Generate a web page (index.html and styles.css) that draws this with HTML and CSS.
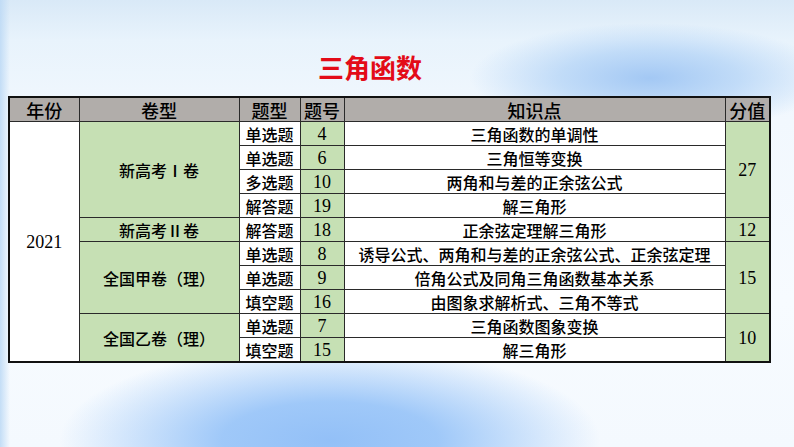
FILE: index.html
```html
<!DOCTYPE html>
<html lang="zh">
<head>
<meta charset="utf-8">
<link rel="stylesheet" href="styles.css">
</head>
<body>
<div class="page">
  <h1 class="title">三角函数</h1>
  <table class="grid">
    <colgroup>
      <col class="c1"><col class="c2"><col class="c3"><col class="c4"><col class="c5"><col class="c6">
    </colgroup>
    <thead>
      <tr class="head">
        <th>年份</th><th>卷型</th><th>题型</th><th>题号</th><th>知识点</th><th>分值</th>
      </tr>
    </thead>
    <tbody>
      <tr>
        <td class="year num" rowspan="10">2021</td>
        <td class="green" rowspan="4">新高考Ⅰ卷</td>
        <td>单选题</td><td class="green num">4</td><td>三角函数的单调性</td>
        <td class="green num" rowspan="4">27</td>
      </tr>
      <tr><td>单选题</td><td class="green num">6</td><td>三角恒等变换</td></tr>
      <tr><td>多选题</td><td class="green num">10</td><td>两角和与差的正余弦公式</td></tr>
      <tr><td>解答题</td><td class="green num">19</td><td>解三角形</td></tr>
      <tr>
        <td class="green">新高考Ⅱ卷</td>
        <td>解答题</td><td class="green num">18</td><td>正余弦定理解三角形</td>
        <td class="green num">12</td>
      </tr>
      <tr>
        <td class="green" rowspan="3">全国甲卷（理）</td>
        <td>单选题</td><td class="green num">8</td><td>诱导公式、两角和与差的正余弦公式、正余弦定理</td>
        <td class="green num" rowspan="3">15</td>
      </tr>
      <tr><td>单选题</td><td class="green num">9</td><td>倍角公式及同角三角函数基本关系</td></tr>
      <tr><td>填空题</td><td class="green num">16</td><td>由图象求解析式、三角不等式</td></tr>
      <tr>
        <td class="green" rowspan="2">全国乙卷（理）</td>
        <td>单选题</td><td class="green num">7</td><td>三角函数图象变换</td>
        <td class="green num" rowspan="2">10</td>
      </tr>
      <tr><td>填空题</td><td class="green num">15</td><td>解三角形</td></tr>
    </tbody>
  </table>
</div>
</body>
</html>
```

FILE: styles.css
```css
html, body {
  margin: 0;
  padding: 0;
}
body {
  width: 794px;
  height: 447px;
  overflow: hidden;
  background:
    linear-gradient(to right, rgba(190, 218, 245, 0.9) 0px, rgba(220, 236, 250, 0) 10px),
    radial-gradient(ellipse 270px 95px at 330px 440px, #93c0f7 0%, rgba(150, 195, 248, 0.9) 40%, rgba(215, 234, 252, 0) 100%),
    radial-gradient(ellipse 180px 55px at 650px 78px, #a3c8f4 0%, rgba(175, 209, 246, 0.7) 50%, rgba(230, 242, 252, 0) 100%),
    linear-gradient(to bottom, #d9e9f7 0px, #e8f3fc 40px, #f2f8fe 120px, #f7fbff 300px, #f4f9fe 447px);
  font-family: "Noto Sans CJK SC", sans-serif;
}
.page {
  padding-top: 48px;
}
.title {
  margin: 0 0 10px 318px;
  font-size: 26px;
  line-height: 38px;
  height: 38px;
  font-weight: bold;
  color: #e30b18;
}
.grid {
  margin-left: 8px;
  width: 761px;
  border-collapse: collapse;
  table-layout: fixed;
  border: 2px solid #111;
  background: #fff;
  font-size: 16px;
  font-weight: 500;
  color: #000;
}
.c1 { width: 70px; }
.c2 { width: 160px; }
.c3 { width: 61px; }
.c4 { width: 44px; }
.c5 { width: 381px; }
.c6 { width: 45px; }
.grid th, .grid td {
  border: 1px solid #2a2a2a;
  padding: 0;
  text-align: center;
  vertical-align: middle;
  line-height: 22px;
  white-space: nowrap;
  overflow: hidden;
}
.grid td { height: 23px; }
.head th {
  background: #b1adaa;
  font-weight: 500;
  font-size: 18px;
  height: 23px;
}
.green {
  background: #c6e0b4;
}
.num {
  font-family: "Liberation Serif", serif;
  font-size: 18px;
  font-weight: normal;
}
.year {
  background: #fff;
}
```
